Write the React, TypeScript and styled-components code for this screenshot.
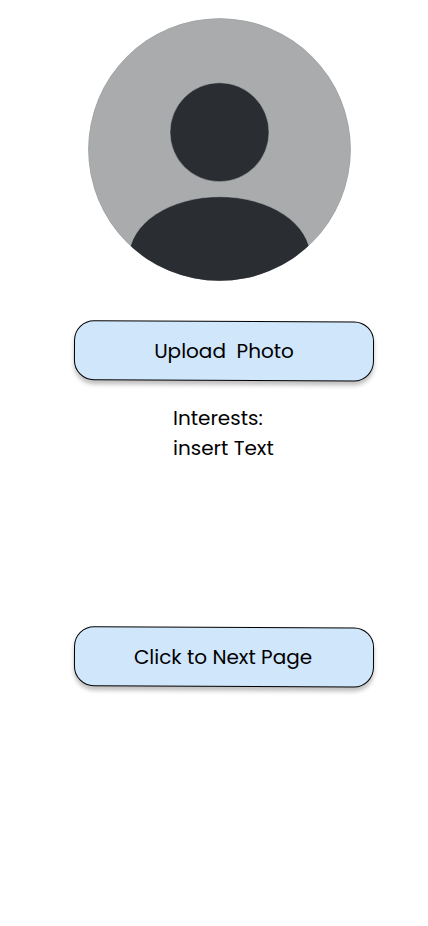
import React from "react";
import styled, { createGlobalStyle } from "styled-components";

const GlobalStyle = createGlobalStyle`
  * { box-sizing: border-box; }
  body { margin: 0; background: #fff; }
`;

const Page = styled.main`
  display: flex;
  flex-direction: column;
  width: 428px;
  height: 926px;
  overflow: hidden;
  background: #fff;
  color: #000;
  font: 400 20px/30px Poppins, Inter, sans-serif;
`;

const Avatar = styled.svg`
  display: block;
  flex: none;
  width: 264px;
  height: 264px;
  margin: 18px 0 0 88px;
`;

const Button = styled.button<{ $top: number; $inset?: number }>`
  position: relative;
  isolation: isolate;
  flex: none;
  width: 300px;
  height: 60px;
  margin: ${({ $top }) => $top}px 0 0 74px;
  padding: 0 ${({ $inset = 0 }) => $inset}px 0 0;
  border: 0;
  background: none;
  color: inherit;
  font: inherit;
  white-space: pre;

  &::before {
    content: "";
    position: absolute;
    inset: 0;
    z-index: -1;
    border: 1px solid #000;
    border-radius: 20px;
    background: #d0e6fb;
    box-shadow: 0 4px 4px rgba(0, 0, 0, 0.25);
    transform: translateY(-0.2px) rotate(0.28deg);
  }
`;

const Interests = styled.section`
  margin: 22px 0 0 173px;
  height: 60px;
`;

const Line = styled.p`
  margin: 0;
  white-space: nowrap;
`;

export default function App() {
  return (
    <>
      <GlobalStyle />
      <Page>
        <Avatar viewBox="0 0 264 264" role="img" aria-label="Profile photo">
          <defs>
            <clipPath id="avatar-circle">
              <circle cx="131.5" cy="131.5" r="131.3" />
            </clipPath>
          </defs>
          <g clipPath="url(#avatar-circle)">
            <rect width="264" height="264" fill="#a9abad" />
            <circle cx="131.5" cy="131.5" r="131" fill="none" stroke="#9ea2a2" strokeWidth=".7" />
            <ellipse cx="131.7" cy="239" rx="90.7" ry="60.3" fill="#2a2d32" stroke="#bac0c1" strokeWidth=".5" />
          </g>
          <circle cx="131.5" cy="114.2" r="49.5" fill="#2a2d32" stroke="#bac0c1" strokeWidth=".5" />
        </Avatar>
        <Button $top={39}>{"Upload  Photo"}</Button>
        <Interests>
          <Line>Interests:</Line>
          <Line>insert Text</Line>
        </Interests>
        <Button $top={164} $inset={2}>Click to Next Page</Button>
      </Page>
    </>
  );
}
